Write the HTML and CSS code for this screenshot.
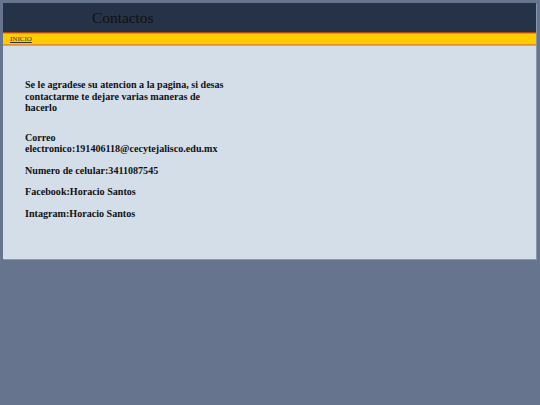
FILE: index.html
```html
<!DOCTYPE html>
<html>
<head>
<meta charset="utf-8">
<link rel="stylesheet" href="styles.css">
</head>
<body>
<div class="page">
  <header class="top">
    <h1 class="title">Contactos</h1>
  </header>
  <nav class="menu"><a href="#" class="link">INICIO</a></nav>
  <main class="content">
    <div class="text">
      <p class="intro">Se le agradese su atencion a la pagina, si desas contactarme te dejare varias maneras de hacerlo</p>
      <p class="item">Correo electronico:191406118@cecytejalisco.edu.mx</p>
      <p class="item">Numero de celular:3411087545</p>
      <p class="item">Facebook:Horacio Santos</p>
      <p class="item">Intagram:Horacio Santos</p>
    </div>
  </main>
</div>
</body>
</html>
```

FILE: styles.css
```css
html, body { margin: 0; padding: 0; }
body {
  background: #66758d;
  font-family: "Liberation Serif", "Times New Roman", serif;
  width: 540px;
  height: 405px;
  overflow: hidden;
}
.page {
  margin: 3px 4px 0 3px;
  background: #d4dee8;
  height: 256px;
  box-shadow: 1px 1px 0 #8a96aa;
}
.top {
  background: #263248;
  height: 29px;
  display: flex;
  align-items: center;
}
.title {
  margin: 0 0 0 89px;
  font-weight: normal;
  font-size: 15.4px;
  color: #111;
}
.menu {
  background: #ffcc00;
  border-top: 1px solid #b04a10;
  box-shadow: inset 0 1px 0 #e8902a, inset 0 -1px 0 #e8902a;
  border-bottom: 1px solid #f0a040;
  height: 12px;
  display: flex;
  align-items: center;
  padding-left: 7px;
}
.link {
  font-size: 7px;
  color: #333;
  text-decoration: underline;
}
.content {
  padding: 33px 0 0 22px;
}
.text {
  width: 204px;
  font-size: 10.1px;
  font-weight: bold;
  color: #111;
  line-height: 11.5px;
}
.intro { margin: 0 0 18px 0; }
.item { margin: 0 0 10px 0; }
```
